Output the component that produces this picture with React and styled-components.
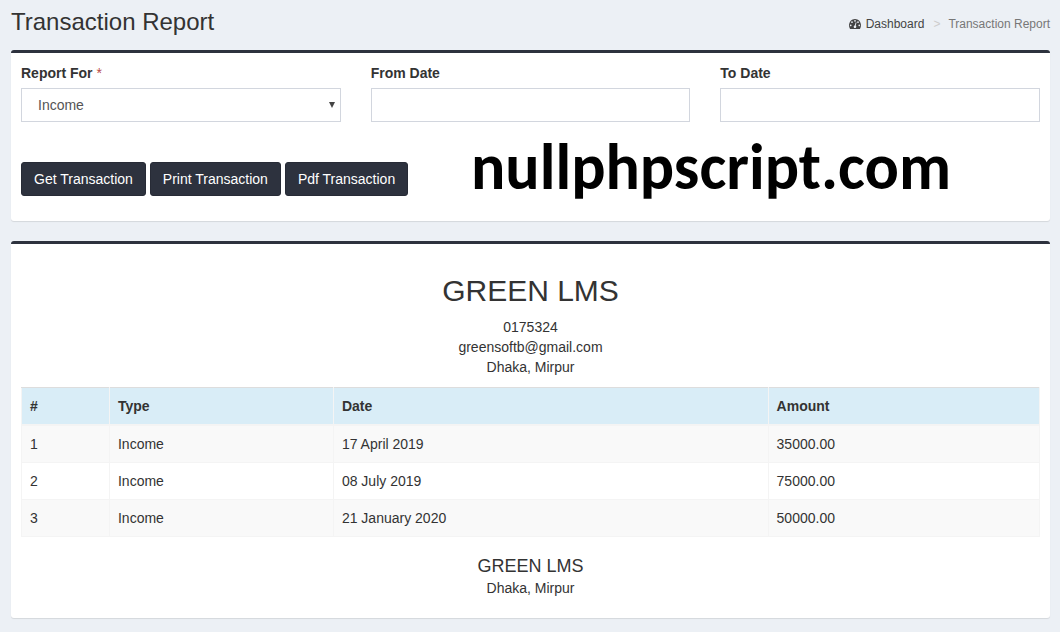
import React from "react";
import styled, { createGlobalStyle } from "styled-components";

const GlobalStyle = createGlobalStyle`
  *, *::before, *::after { box-sizing: border-box; }
  body {
    margin: 0;
    background: #ecf0f5;
    color: #333;
    font: 14px/20px "Liberation Sans", Arial, sans-serif;
  }
`;

const Page = styled.main`
  padding: 0 10px 14px 11px;
`;

const PageHeader = styled.header`
  display: flex;
  justify-content: space-between;
  align-items: center;
  height: 50px;
  padding-bottom: 6px;
`;

const PageTitle = styled.h1`
  margin: 0;
  font-size: 24px;
  line-height: 26px;
  font-weight: 400;
`;

const Breadcrumb = styled.ol`
  display: flex;
  margin: 0;
  padding: 4px 0 0;
  list-style: none;
  font-size: 12px;
  line-height: 18px;
`;

const Crumb = styled.li`
  color: #777;

  & + &::before {
    content: ">";
    padding: 0 8px 0 9px;
    color: #ccc;
  }
`;

const CrumbLink = styled.a`
  display: flex;
  align-items: center;
  gap: 5px;
  color: #444;
  text-decoration: none;
`;

const Panel = styled.section`
  position: relative;
  margin-bottom: 20px;
  padding: 10px 10px ${(p) => p.$bottom}px;
  background: #fff;
  border-top: 3px solid #2d323e;
  border-radius: 3px;
  box-shadow: 0 1px 1px rgba(0, 0, 0, 0.1);

  &:last-child { margin-bottom: 0; }
`;

const Fields = styled.div`
  display: grid;
  grid-template-columns: repeat(3, 1fr);
  gap: 30px;
`;

const Label = styled.label`
  display: block;
  margin-bottom: 5px;
  font-weight: 700;
`;

const Required = styled.span`
  color: #b94a48;
  font-weight: 400;
`;

const Input = styled.input`
  display: block;
  width: 100%;
  height: 34px;
  padding: 6px 12px;
  border: 1px solid #d2d6de;
  border-radius: 0;
  background: #fff;
  color: #555;
  font: inherit;
`;

const SelectWrap = styled.div`
  position: relative;

  &::after {
    content: "";
    position: absolute;
    top: 14px;
    right: 6px;
    border: 3px solid transparent;
    border-top: 6px solid #444;
    border-bottom: 0;
    pointer-events: none;
  }
`;

const Select = styled(Input)`
  appearance: none;
  padding: 6px 16px;
`;

const Actions = styled.div`
  display: flex;
  gap: 4px;
  margin-top: 40px;
`;

const Button = styled.button`
  height: 34px;
  padding: 0 12px;
  border: 1px solid #272b36;
  border-radius: 3px;
  background: #2d323e;
  color: #fff;
  font: inherit;
  white-space: nowrap;
`;

const Watermark = styled.div`
  position: absolute;
  top: 78px;
  left: 460px;
  color: #000;
  font: 700 64px/72px Carlito, Lato, sans-serif;
  pointer-events: none;
`;

const ReportHead = styled.div`
  padding: 20px 0 10px;
  text-align: center;
`;

const ReportTitle = styled.h2`
  margin: 0 0 10px;
  font-size: 30px;
  line-height: 33px;
  font-weight: 400;
`;

const ReportFoot = styled.footer`
  padding-top: 19px;
  text-align: center;
`;

const FootTitle = styled.h4`
  margin: 0 0 2px;
  font-size: 18px;
  line-height: 20px;
  font-weight: 400;
`;

const Table = styled.table`
  width: 100%;
  table-layout: fixed;
  border-collapse: collapse;
  border: 1px solid #f4f4f4;

  thead tr { background: #d9edf7; }
  thead th {
    border-top-color: #ddd;
    border-bottom: 2px solid #f4f4f4;
  }
  tbody tr:nth-child(odd) { background: #f9f9f9; }
`;

const Cell = styled.td`
  padding: 8px;
  border: 1px solid #f4f4f4;
  text-align: left;
`;

const HeadCell = styled(Cell)`
  width: ${(p) => p.$width};
`;

const DashboardIcon = () => (
  <svg
    width="12"
    height="10"
    viewBox="0 256 1792 1408"
    preserveAspectRatio="none"
    fill="currentColor"
    aria-hidden="true"
  >
    <path d="M384 1152q0-53-37.5-90.5t-90.5-37.5-90.5 37.5-37.5 90.5 37.5 90.5 90.5 37.5 90.5-37.5 37.5-90.5zm192-448q0-53-37.5-90.5t-90.5-37.5-90.5 37.5-37.5 90.5 37.5 90.5 90.5 37.5 90.5-37.5 37.5-90.5zm428 481l101-382q6-26-7.5-48.5t-38.5-29.5-48 6.5-30 39.5l-101 382q-60 5-107 43.5t-63 98.5q-20 77 20 146t117 89 146-20 89-117q16-60-6-117t-72-91zm660-33q0-53-37.5-90.5t-90.5-37.5-90.5 37.5-37.5 90.5 37.5 90.5 90.5 37.5 90.5-37.5 37.5-90.5zm-640-640q0-53-37.5-90.5t-90.5-37.5-90.5 37.5-37.5 90.5 37.5 90.5 90.5 37.5 90.5-37.5 37.5-90.5zm448 192q0-53-37.5-90.5t-90.5-37.5-90.5 37.5-37.5 90.5 37.5 90.5 90.5 37.5 90.5-37.5 37.5-90.5zm320 448q0 261-141 483-19 29-54 29h-1402q-35 0-54-29-141-221-141-483 0-182 71-348t191-286 286-191 348-71 348 71 286 191 191 286 71 348z" />
  </svg>
);

const columns = [
  { title: "#", width: "8.64%" },
  { title: "Type", width: "22%" },
  { title: "Date", width: "42.7%" },
  { title: "Amount", width: "auto" },
];

const rows = [
  [1, "Income", "17 April 2019", "35000.00"],
  [2, "Income", "08 July 2019", "75000.00"],
  [3, "Income", "21 January 2020", "50000.00"],
];

export default function App() {
  return (
    <>
      <GlobalStyle />
      <Page>
        <PageHeader>
          <PageTitle>Transaction Report</PageTitle>
          <nav aria-label="Breadcrumb">
            <Breadcrumb>
              <Crumb>
                <CrumbLink href="#">
                  <DashboardIcon />
                  Dashboard
                </CrumbLink>
              </Crumb>
              <Crumb>Transaction Report</Crumb>
            </Breadcrumb>
          </nav>
        </PageHeader>

        <Panel as="form" $bottom={25} onSubmit={(e) => e.preventDefault()}>
          <Fields>
            <div>
              <Label htmlFor="report-for">
                Report For <Required>*</Required>
              </Label>
              <SelectWrap>
                <Select as="select" id="report-for" defaultValue="Income">
                  <option>Income</option>
                  <option>Expense</option>
                </Select>
              </SelectWrap>
            </div>
            <div>
              <Label htmlFor="from-date">From Date</Label>
              <Input id="from-date" type="text" />
            </div>
            <div>
              <Label htmlFor="to-date">To Date</Label>
              <Input id="to-date" type="text" />
            </div>
          </Fields>
          <Actions>
            <Button type="submit">Get Transaction</Button>
            <Button type="button">Print Transaction</Button>
            <Button type="button">Pdf Transaction</Button>
          </Actions>
          <Watermark>nullphpscript.com</Watermark>
        </Panel>

        <Panel $bottom={20}>
          <ReportHead>
            <ReportTitle>GREEN LMS</ReportTitle>
            <div>0175324</div>
            <div>greensoftb@gmail.com</div>
            <div>Dhaka, Mirpur</div>
          </ReportHead>
          <Table>
            <thead>
              <tr>
                {columns.map((c) => (
                  <HeadCell as="th" key={c.title} $width={c.width} scope="col">
                    {c.title}
                  </HeadCell>
                ))}
              </tr>
            </thead>
            <tbody>
              {rows.map((row) => (
                <tr key={row[0]}>
                  {row.map((value, i) => (
                    <Cell key={i}>{value}</Cell>
                  ))}
                </tr>
              ))}
            </tbody>
          </Table>
          <ReportFoot>
            <FootTitle>GREEN LMS</FootTitle>
            <div>Dhaka, Mirpur</div>
          </ReportFoot>
        </Panel>
      </Page>
    </>
  );
}
